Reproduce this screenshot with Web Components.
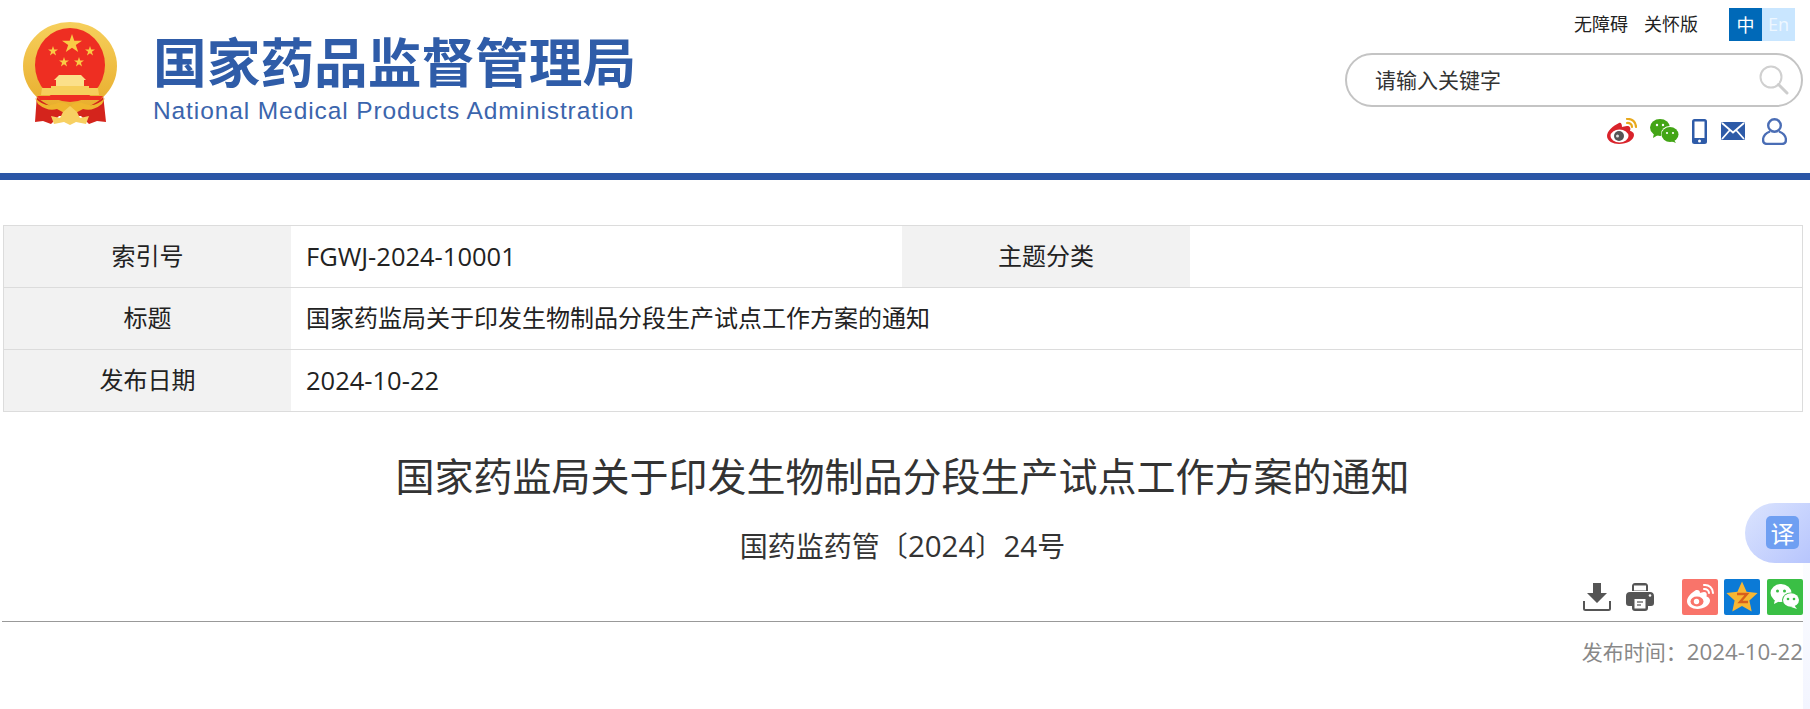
<!DOCTYPE html>
<html lang="zh-CN"><head><meta charset="utf-8"><title>国家药监局关于印发生物制品分段生产试点工作方案的通知</title>
<style>
html,body{margin:0;padding:0;background:#fff;height:709px;overflow:hidden}
body{font-family:"Open Sans","Noto Sans CJK SC",sans-serif;color:#222;position:relative}
</style></head><body>
<site-header></site-header>
<info-table></info-table>
<article-head></article-head>
<translate-tab></translate-tab>
<script>
const FONT='"Open Sans","Noto Sans CJK SC",sans-serif';
const CJK='"Noto Sans CJK SC","Open Sans",sans-serif';
function def(name,html){customElements.define(name,class extends HTMLElement{constructor(){super();this.attachShadow({mode:'open'}).innerHTML=html;}});}

def('gov-emblem',`<style>:host{display:block;width:94px;height:104px}svg{display:block}</style>
<svg width="94" height="104" viewBox="0 0 94 104">
<defs><linearGradient id="g" x1="0" y1="0" x2="0" y2="1"><stop offset="0" stop-color="#f6cf5c"/><stop offset="1" stop-color="#e8ad2c"/></linearGradient></defs>
<path d="M14 72 L12 100 L20 99 L28 102 L36 94 L58 94 L66 102 L74 99 L83 100 L80 72 Z" fill="#d4241c"/>
<ellipse cx="47" cy="44" rx="47" ry="44" fill="url(#g)"/>
<ellipse cx="47" cy="43" rx="35" ry="37" fill="#ee2e22"/>
<path d="M49 12l2.300 6.700h7.700l-6.200 4.400 2.400 6.900-6.200-4.300-6.200 4.300 2.400-6.900-6.200-4.400h7.700z" fill="#f9cb45"/>
<path d="M30 24l1.200 3.600h3.800l-3.100 2.200 1.200 3.600-3.100-2.200-3.100 2.200 1.200-3.600-3.100-2.200h3.800zM67 24l1.200 3.600h3.800l-3.100 2.200 1.200 3.600-3.100-2.200-3.100 2.200 1.200-3.600-3.100-2.200h3.800zM41 35l1.200 3.600h3.800l-3.100 2.200 1.200 3.600-3.100-2.200-3.100 2.200 1.200-3.600-3.100-2.200h3.800zM56 35l1.200 3.600h3.800l-3.100 2.200 1.200 3.600-3.100-2.200-3.100 2.200 1.200-3.600-3.100-2.200h3.800z" fill="#f9cb45"/>
<path d="M36 53h22l5 5H31zM33 58h28v6H33z" fill="#fbe08a"/>
<path d="M28 64h38v2H28zM19 66h56l1 7H18z" fill="#f6cf5c"/>
<path d="M14 74h66l-3 4H17z" fill="#ee2e22"/>
<path d="M12 76q10 10 20 6t15 3q5-7 15-3t20-6l-3 6q-10 8-19 5l-13 7-13-7q-9 3-19-5z" fill="#efb52e"/>
<path d="M28 94l9 2 3-6 7-6 7 6 3 6 9-2-3 8-10-2-6 3-6-3-10 2z" fill="#f7d062"/>
</svg>`);

def('logo-block',`<style>:host{display:flex;align-items:flex-start;}
.t{margin-left:36px;display:flex;flex-direction:column;padding-top:8px}
.cn{font:700 53.700px/60px ${CJK};color:#2f5ca8;white-space:nowrap}
.en{font:400 24.500px/28px "Liberation Sans",sans-serif;color:#3b65ad;white-space:nowrap;margin-top:7px;letter-spacing:.9px}
</style><gov-emblem></gov-emblem><div class="t"><div class="cn">国家药品监督管理局</div><div class="en">National Medical Products Administration</div></div>`);

def('icon-row',`<style>:host{display:flex;align-items:center;justify-content:flex-end;height:28px}svg{display:block}</style>
<svg style="margin-right:13px" width="30" height="26" viewBox="0 0 30 26"><path d="M12 5C6 8 0 13 0 18c0 5 6 8 12 8 8 0 15-4 15-9 0-3-3-4-4-4 1-3 0-5-3-5-2 0-4 1-5 1 0-3-1-5-3-4z" fill="#d9232b"/><ellipse cx="12.500" cy="18" rx="9" ry="6.500" fill="#fff"/><circle cx="12" cy="18" r="5" fill="#555"/><circle cx="10.500" cy="18" r="1.500" fill="#ddd"/><path d="M20 1c5-.5 9 3 9 8M20 5c3-.3 5 1.500 5 4" fill="none" stroke="#e8a91d" stroke-width="2.200" stroke-linecap="round"/></svg>
<svg style="margin-right:13px" width="29" height="24" viewBox="0 0 29 24"><ellipse cx="10" cy="8.500" rx="10" ry="8.500" fill="#43a516"/><path d="M4 14l-1 5 5-3z" fill="#43a516"/><ellipse cx="20" cy="15" rx="9" ry="8" fill="#fff"/><ellipse cx="20" cy="15.500" rx="8.500" ry="7.500" fill="#43a516"/><path d="M24 21l2 3-5-2z" fill="#43a516"/><circle cx="7" cy="6" r="1.200" fill="#fff"/><circle cx="13" cy="6" r="1.200" fill="#fff"/><circle cx="17" cy="14" r="1.100" fill="#fff"/><circle cx="23" cy="14" r="1.100" fill="#fff"/></svg>
<svg style="margin-right:14px" width="15" height="25" viewBox="0 0 15 25"><rect width="15" height="25" rx="2.500" fill="#2e5ba8"/><rect x="2.500" y="2.500" width="10" height="16.500" fill="#fff"/><circle cx="7.500" cy="22" r="1.500" fill="#fff"/></svg>
<svg style="margin-right:17px" width="24" height="18" viewBox="0 0 24 18"><rect width="24" height="18" rx="1.500" fill="#2e5ba8"/><path d="M1 1l11 9.500L23 1M1 17l7.500-8.500M23 17l-7.500-8.500" fill="none" stroke="#fff" stroke-width="1.800"/></svg>
<svg style="margin-right:16px" width="25" height="27" viewBox="0 0 25 27"><circle cx="12.500" cy="7.500" r="6.300" fill="none" stroke="#4a6db5" stroke-width="2.400"/><path d="M8 13.500C4 15 1.100 18 1.100 22c0 2.500 1.500 3.900 3.900 3.900h15c2.400 0 3.900-1.400 3.900-3.900 0-4-2.900-7-6.900-8.500" fill="none" stroke="#4a6db5" stroke-width="2.400"/></svg>`);

def('search-box',`<style>:host{display:flex;align-items:center;box-sizing:border-box;width:458px;height:54px;border:2px solid #c4c4c4;border-radius:27px;padding:0 12px 0 28px;justify-content:space-between}
span{font:400 21px/1 ${CJK};color:#333;margin-bottom:2px}</style>
<span>请输入关键字</span>
<svg width="30" height="30" viewBox="0 0 30 30"><circle cx="12" cy="12" r="10.500" fill="none" stroke="#d0d0d0" stroke-width="2"/><path d="M19.500 19.500L28 28" stroke="#cdcdcd" stroke-width="3" stroke-linecap="round"/></svg>`);

def('top-tools',`<style>:host{display:flex;flex-direction:column;align-items:flex-end}
.a{display:flex;align-items:center;height:33px;margin:8px 15px 12px 0;font:400 18px/33px ${CJK};color:#222}
.a span{margin:0 16px 2px 0}.a span+span{margin-right:31px}
b{display:block;width:33px;height:33px;text-align:center;font:400 18px/33px ${CJK};color:#fff;background:#0069b8}
b+b{background:#c9e6ff;color:#eef7ff;font-family:"Open Sans",sans-serif}
search-box{margin-right:7px}icon-row{margin-top:10px;width:458px;margin-right:7px}
</style><div class="a"><span>无障碍</span><span>关怀版</span><b>中</b><b>En</b></div><search-box></search-box><icon-row></icon-row>`);

def('site-header',`<style>:host{display:flex;justify-content:space-between;box-sizing:border-box;height:180px;border-bottom:7px solid #2b56a6;}
logo-block{margin:22px 0 0 23px}</style><logo-block></logo-block><top-tools></top-tools>`);

def('info-table',`<style>:host{display:grid;grid-template-columns:287px 611px 288px 1fr;grid-auto-rows:62px;box-sizing:border-box;margin:45px 7px 0 3px;border:1px solid #dcdcdc;border-bottom:0;font:400 24px/60px ${FONT};color:#222}
div{border-bottom:1px solid #dcdcdc;box-sizing:border-box;white-space:nowrap}
.l{background:#f2f2f2;text-align:center}.v{padding-left:15px}.w{grid-column:2/5}
i{font-style:normal;font-size:25.500px}
</style>
<div class="l">索引号</div><div class="v"><i>FGWJ-2024-10001</i></div><div class="l">主题分类</div><div class="v"></div>
<div class="l">标题</div><div class="v w">国家药监局关于印发生物制品分段生产试点工作方案的通知</div>
<div class="l">发布日期</div><div class="v w"><i>2024-10-22</i></div>`);

def('share-tools',`<style>:host{display:flex;align-items:center;justify-content:flex-end;height:36px}svg{display:block}</style>
<svg style="margin-right:15px" width="28" height="28" viewBox="0 0 28 28"><path d="M10 0h8v10h6L14 20 4 10h6z" fill="#555"/><path d="M1 18v7.500c0 1 .6 1.500 1.500 1.500h23c.9 0 1.500-.5 1.500-1.500V18" fill="none" stroke="#555" stroke-width="2"/></svg>
<svg style="margin-right:28px" width="28" height="28" viewBox="0 0 28 28"><path d="M6 8V3c0-1.500 1-3 3-3h10c2 0 3 1.500 3 3v5z" fill="#555"/><rect x="8" y="2.500" width="12" height="5" fill="#fff"/><path d="M4 9h20c2.500 0 4 1.500 4 4v7c0 2-1 3-3 3h-3v2c0 2-1 3-3 3H9c-2 0-3-1-3-3v-2H3c-2 0-3-1-3-3v-7c0-2.500 1.500-4 4-4z" fill="#555"/><rect x="8.500" y="16" width="11" height="9.500" fill="#fff"/><path d="M11 19h6M11 22h4" stroke="#777" stroke-width="1.500"/><circle cx="24" cy="12.500" r="1.300" fill="#fff"/></svg>
<svg style="margin-right:6px" width="36" height="36" viewBox="0 0 36 36"><rect width="36" height="36" rx="2" fill="#f9746a"/><path d="M14 11C9 14 5 18 5 22.500 5 27 10 30 15.500 30 22 30 28 26 28 21.500c0-2.500-2-3.500-3.500-4 .8-2.500 0-4.500-2.500-4.500-1.500 0-3 .8-4 1 0-2.500-1.500-3.500-4-3z" fill="#fff"/><ellipse cx="15" cy="22.500" rx="6.500" ry="5" fill="#f9746a"/><circle cx="14.500" cy="22.500" r="2.700" fill="#fff"/><path d="M22 6c5-.5 9 3 9 8M22 10c2.500-.3 5 1.500 5 4" fill="none" stroke="#fff" stroke-width="2" stroke-linecap="round"/></svg>
<svg style="margin-right:7px" width="36" height="36" viewBox="0 0 36 36"><rect width="36" height="36" rx="2" fill="#0b7ad6"/><path d="M18 2.500l4.600 10.300 11 1.200-8.200 7.500 2.300 11.100L18 27l-9.700 5.600 2.300-11.100L2.400 14l11-1.200z" fill="#f7b733"/><path d="M13 15h10l-7 8h8" fill="none" stroke="#d9601b" stroke-width="2.400"/></svg>
<svg width="36" height="36" viewBox="0 0 36 36"><rect width="36" height="36" rx="2" fill="#3abf45"/><ellipse cx="14" cy="14" rx="10.500" ry="9" fill="#fff"/><path d="M8 20l-1 5 6-3z" fill="#fff"/><ellipse cx="24" cy="21" rx="9" ry="7.500" fill="#3abf45"/><ellipse cx="24" cy="21" rx="8" ry="6.800" fill="#fff"/><path d="M27 26l3 4-6-2z" fill="#fff"/><circle cx="10.500" cy="12" r="1.500" fill="#3abf45"/><circle cx="17.500" cy="12" r="1.500" fill="#3abf45"/><circle cx="21" cy="20" r="1.300" fill="#3abf45"/><circle cx="27" cy="20" r="1.300" fill="#3abf45"/></svg>`);

def('article-head',`<style>:host{display:block;margin:0 7px 0 2px}
h1{margin:31px 0 0;font:400 39px/62px ${CJK};color:#333;text-align:center;white-space:nowrap}
h2{margin:20px 0 0;font:400 28px/40px ${CJK};color:#333;text-align:center}
h2 i{font-style:normal;font-family:"Open Sans",sans-serif;font-size:29.500px}
share-tools{margin-top:13px}
.rule{height:1px;background:#999;margin-top:6px}
.d{margin-top:15px;text-align:right;font:400 21px/28px ${CJK};color:#888}
.d i{font-style:normal;font-family:"Open Sans",sans-serif;font-size:22.300px}
</style><h1>国家药监局关于印发生物制品分段生产试点工作方案的通知</h1><h2>国药监药管〔<i>2024</i>〕<i>24</i>号</h2><share-tools></share-tools><div class="rule"></div><div class="d">发布时间：<i>2024-10-22</i></div>`);

def('translate-tab',`<style>:host{position:absolute;right:0;top:503px;width:65px;height:60px;border-radius:30px 0 0 30px;background:linear-gradient(135deg,#dbe4fe,#b7c5fd);display:block}
:host::after{content:"";position:absolute;right:0;top:60px;width:7px;height:146px;background:linear-gradient(#fbfcff,#f3f5ff)}
span{position:absolute;left:21px;top:13px;width:33px;height:33px;border-radius:5px;background:#6f9ff2;color:#fff;text-align:center;font:400 24px/33px ${CJK}}</style><span>译</span>`);
</script></body></html>
